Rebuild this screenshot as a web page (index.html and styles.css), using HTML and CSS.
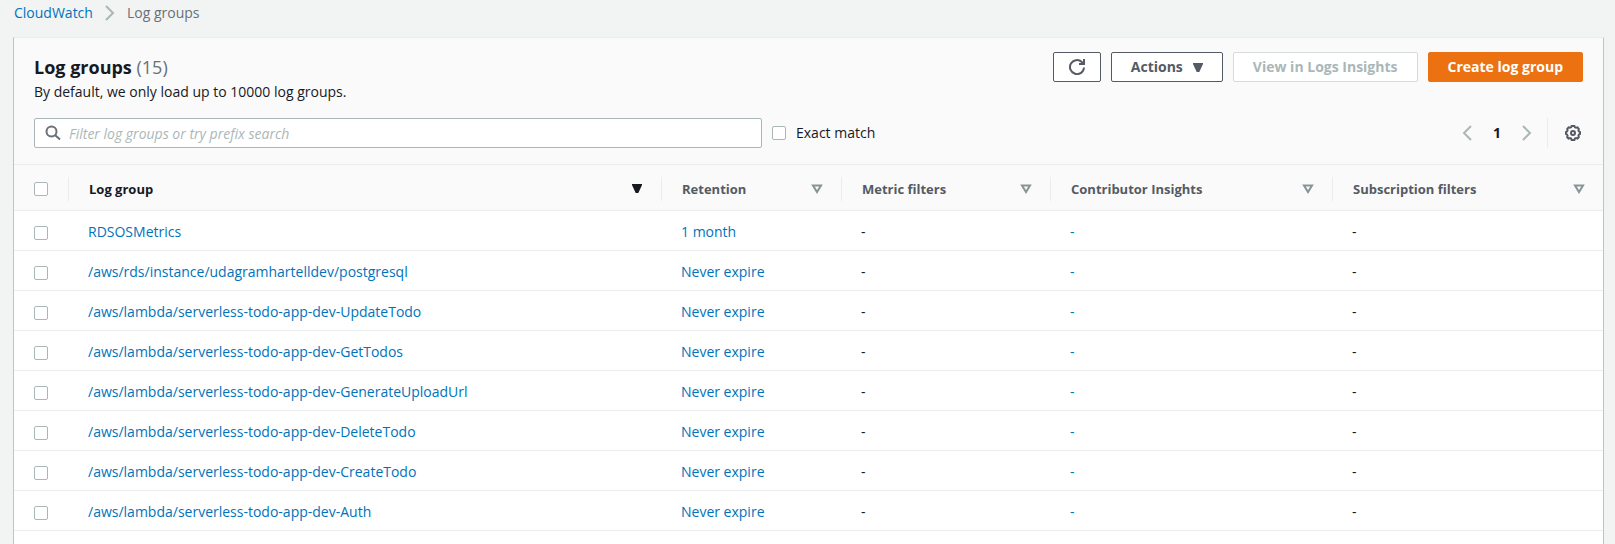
FILE: index.html
```
<!DOCTYPE html>
<html lang="en">
<head>
<meta charset="utf-8">
<title>CloudWatch - Log groups</title>
<link rel="stylesheet" href="styles.css">
</head>
<body>
<nav class="breadcrumbs" aria-label="Breadcrumbs">
  <a href="#">CloudWatch</a>
  <svg class="crumb-sep" width="10" height="16" viewBox="0 0 10 16"><path d="M1 1l7 7-7 7"/></svg>
  <span>Log groups</span>
</nav>
<main class="panel">
  <header class="panel-head">
    <div class="title-row">
      <div class="title-text">
        <h1>Log groups <span class="count">(15)</span></h1>
        <p>By default, we only load up to 10000 log groups.</p>
      </div>
      <div class="actions">
        <button class="btn btn-icon" type="button" aria-label="Refresh">
          <svg width="16" height="16" viewBox="0 0 16 16"><path class="stroke" d="M15 8.500a7 7 0 1 1-2.200-5.500L14 4.500"/><path class="fill" d="M14 0h2v6h-6V4h4z"/></svg>
        </button>
        <button class="btn" type="button">Actions
          <svg width="10" height="9" viewBox="0 0 10 9"><path class="fill" d="M0 0h10v1L6.300 9H3.700L0 1z"/></svg>
        </button>
        <button class="btn" type="button" disabled>View in Logs Insights</button>
        <button class="btn btn-primary" type="button">Create log group</button>
      </div>
    </div>
    <div class="filter-row">
      <div class="search">
        <svg width="16" height="16" viewBox="0 0 16 16"><circle cx="6.500" cy="6.500" r="5"/><path d="M10 10l5 4.500"/></svg>
        <input type="text" aria-label="Filter log groups" placeholder="Filter log groups or try prefix search">
      </div>
      <label class="exact"><input class="check" type="checkbox">Exact match</label>
      <div class="pager">
        <button type="button" aria-label="Previous page"><svg width="10" height="16" viewBox="0 0 10 16"><path d="M9 1L2 8l7 7"/></svg></button>
        <button class="page" type="button">1</button>
        <button type="button" aria-label="Next page"><svg width="10" height="16" viewBox="0 0 10 16"><path d="M1 1l7 7-7 7"/></svg></button>
      </div>
      <button class="gear" type="button" aria-label="Preferences">
        <svg width="16" height="16" viewBox="0 0 16 16"><path d="M6.600 1h2.800l.5 1.300 1.200.5 1.400-.4 1.300 1.500-.4 1.300.5 1.200 1.100.6v2l-1.100.6-.5 1.200.4 1.300-1.400 1.400-1.300-.4-1.200.5-.5 1.300H6.600l-.5-1.300-1.200-.5-1.300.4-1.400-1.400.4-1.300-.5-1.200L1 9V7l1.100-.6.5-1.200-.4-1.300 1.400-1.500 1.300.4 1.200-.5z"/><circle cx="8" cy="8" r="2"/></svg>
      </button>
    </div>
  </header>
  <table class="groups">
    <colgroup><col class="c-check"><col class="c-name"><col class="c-ret"><col class="c-met"><col class="c-con"><col class="c-sub"></colgroup>
    <thead>
      <tr>
        <th><input class="check" type="checkbox" aria-label="Select all"></th>
        <th class="sorted"><div class="th">Log group<svg width="12" height="10" viewBox="0 0 12 10"><path class="fill" d="M1 0h10v1L7.300 9H4.700L1 1z"/></svg></div></th>
        <th><div class="th">Retention<svg width="12" height="10" viewBox="0 0 12 10"><path class="tri" d="M2 1.500h8L6 8z"/></svg></div></th>
        <th><div class="th">Metric filters<svg width="12" height="10" viewBox="0 0 12 10"><path class="tri" d="M2 1.500h8L6 8z"/></svg></div></th>
        <th><div class="th">Contributor Insights<svg width="12" height="10" viewBox="0 0 12 10"><path class="tri" d="M2 1.500h8L6 8z"/></svg></div></th>
        <th><div class="th">Subscription filters<svg width="12" height="10" viewBox="0 0 12 10"><path class="tri" d="M2 1.500h8L6 8z"/></svg></div></th>
      </tr>
    </thead>
    <tbody>
      <tr><td><input class="check" type="checkbox" aria-label="Select RDSOSMetrics"></td><td><a href="#">RDSOSMetrics</a></td><td><a href="#">1 month</a></td><td>-</td><td><a href="#">-</a></td><td>-</td></tr>
      <tr><td><input class="check" type="checkbox" aria-label="Select postgresql"></td><td><a href="#">/aws/rds/instance/udagramhartelldev/postgresql</a></td><td><a href="#">Never expire</a></td><td>-</td><td><a href="#">-</a></td><td>-</td></tr>
      <tr><td><input class="check" type="checkbox" aria-label="Select UpdateTodo"></td><td><a href="#">/aws/lambda/serverless-todo-app-dev-UpdateTodo</a></td><td><a href="#">Never expire</a></td><td>-</td><td><a href="#">-</a></td><td>-</td></tr>
      <tr><td><input class="check" type="checkbox" aria-label="Select GetTodos"></td><td><a href="#">/aws/lambda/serverless-todo-app-dev-GetTodos</a></td><td><a href="#">Never expire</a></td><td>-</td><td><a href="#">-</a></td><td>-</td></tr>
      <tr><td><input class="check" type="checkbox" aria-label="Select GenerateUploadUrl"></td><td><a href="#">/aws/lambda/serverless-todo-app-dev-GenerateUploadUrl</a></td><td><a href="#">Never expire</a></td><td>-</td><td><a href="#">-</a></td><td>-</td></tr>
      <tr><td><input class="check" type="checkbox" aria-label="Select DeleteTodo"></td><td><a href="#">/aws/lambda/serverless-todo-app-dev-DeleteTodo</a></td><td><a href="#">Never expire</a></td><td>-</td><td><a href="#">-</a></td><td>-</td></tr>
      <tr><td><input class="check" type="checkbox" aria-label="Select CreateTodo"></td><td><a href="#">/aws/lambda/serverless-todo-app-dev-CreateTodo</a></td><td><a href="#">Never expire</a></td><td>-</td><td><a href="#">-</a></td><td>-</td></tr>
      <tr><td><input class="check" type="checkbox" aria-label="Select Auth"></td><td><a href="#">/aws/lambda/serverless-todo-app-dev-Auth</a></td><td><a href="#">Never expire</a></td><td>-</td><td><a href="#">-</a></td><td>-</td></tr>
    </tbody>
  </table>
</main>
</body>
</html>
```

FILE: styles.css
```
* { box-sizing: border-box; }

body {
  margin: 0;
  min-height: 100vh;
  display: flex;
  flex-direction: column;
  padding: 0 11px 0 13px;
  background: #f2f3f3;
  color: #16191f;
  font: 14px/20px "Open Sans", "Noto Sans", sans-serif;
}

a { color: #0073bb; text-decoration: none; }
svg { display: block; flex: none; fill: none; }
button { font: inherit; margin: 0; cursor: pointer; }

.breadcrumbs {
  display: flex;
  align-items: center;
  gap: 12px;
  height: 37px;
  padding: 0 1px 12px;
  color: #687078;
}
.crumb-sep { stroke: #aab7b8; stroke-width: 2; }

.panel {
  flex: 1;
  background: #fff;
  border: 1px solid #bcc4c4;
  border-top-color: #eaeded;
  border-bottom: 0;
}
.panel-head {
  background: #fafafa;
  border-bottom: 1px solid #eaeded;
  padding: 14px 20px 16px;
}
.title-row { display: flex; justify-content: space-between; align-items: flex-start; }
.title-text { padding-top: 3px; }
h1 { margin: 0; font-size: 18px; line-height: 24px; font-weight: 700; }
.count { font-weight: 400; color: #687078; }
p { margin: 0; line-height: 25px; }

.actions { display: flex; gap: 10px; }
.btn {
  display: flex;
  align-items: center;
  gap: 10px;
  height: 30px;
  padding: 0 19px;
  border: 1px solid #545b64;
  border-radius: 2px;
  background: #fff;
  color: #545b64;
  font-weight: 700;
}
.btn-icon { padding: 0 15px; }
.btn:disabled { border-color: #d5dbdb; color: #aab7b8; }
.btn-primary { background: #ec7211; border-color: #ec7211; color: #fff; }
.stroke { stroke: #545b64; stroke-width: 2; }
.btn .fill { fill: #545b64; }

.filter-row { display: flex; align-items: center; margin-top: 14px; }
.search {
  display: flex;
  align-items: center;
  gap: 8px;
  flex: 0 1 728px;
  height: 30px;
  padding: 0 10px;
  border: 1px solid #aab7b8;
  border-radius: 2px;
  background: #fff;
}
.search svg { stroke: #687078; stroke-width: 2; }
.search input {
  flex: 1;
  min-width: 0;
  padding: 2px 0 0;
  border: 0;
  outline: 0;
  background: transparent;
  font: inherit;
}
.search input::placeholder { color: #aab7b8; font-style: italic; opacity: 1; }
.exact { display: flex; align-items: center; gap: 10px; margin-left: 10px; }

.check {
  appearance: none;
  display: block;
  width: 14px;
  height: 14px;
  margin: 0;
  border: 1px solid #aab7b8;
  border-radius: 2px;
  background: #fff;
}
.check:checked { background: #0073bb; border-color: #0073bb; }

.pager { display: flex; align-items: center; margin-left: auto; padding-right: 5px; }
.pager button { display: flex; justify-content: center; width: 30px; padding: 0; border: 0; background: none; }
.pager .page { font-weight: 700; color: #16191f; }
.pager svg { stroke: #aab7b8; stroke-width: 2; }
.gear {
  display: flex;
  align-items: center;
  height: 30px;
  padding: 0 2px 0 17px;
  border: 0;
  border-left: 1px solid #eaeded;
  background: none;
}
.gear svg { stroke: #545b64; stroke-width: 2; }

.groups { width: 100%; border-collapse: separate; border-spacing: 0; table-layout: fixed; }
.c-check { width: 54px; }
.c-ret { width: 180px; }
.c-met { width: 209px; }
.c-con { width: 282px; }
.c-sub { width: 271px; }
.groups th, .groups td {
  padding: 0 20px;
  border-bottom: 1px solid #eaeded;
  text-align: left;
}
.groups th {
  height: 46px;
  padding: 2px 0 0 20px;
  background: #fafafa;
  color: #545b64;
  font-size: 13px;
}
.groups td { height: 40px; padding-top: 3px; white-space: nowrap; }
.groups td:first-child { padding-top: 5px; }
.th {
  display: flex;
  align-items: center;
  justify-content: space-between;
  height: 24px;
  margin-left: -20px;
  padding: 0 18px 0 20px;
  border-left: 1px solid #eaeded;
}
.groups .sorted { color: #16191f; }
.th .fill { fill: #16191f; }
.tri { stroke: #879596; stroke-width: 2; }
```
